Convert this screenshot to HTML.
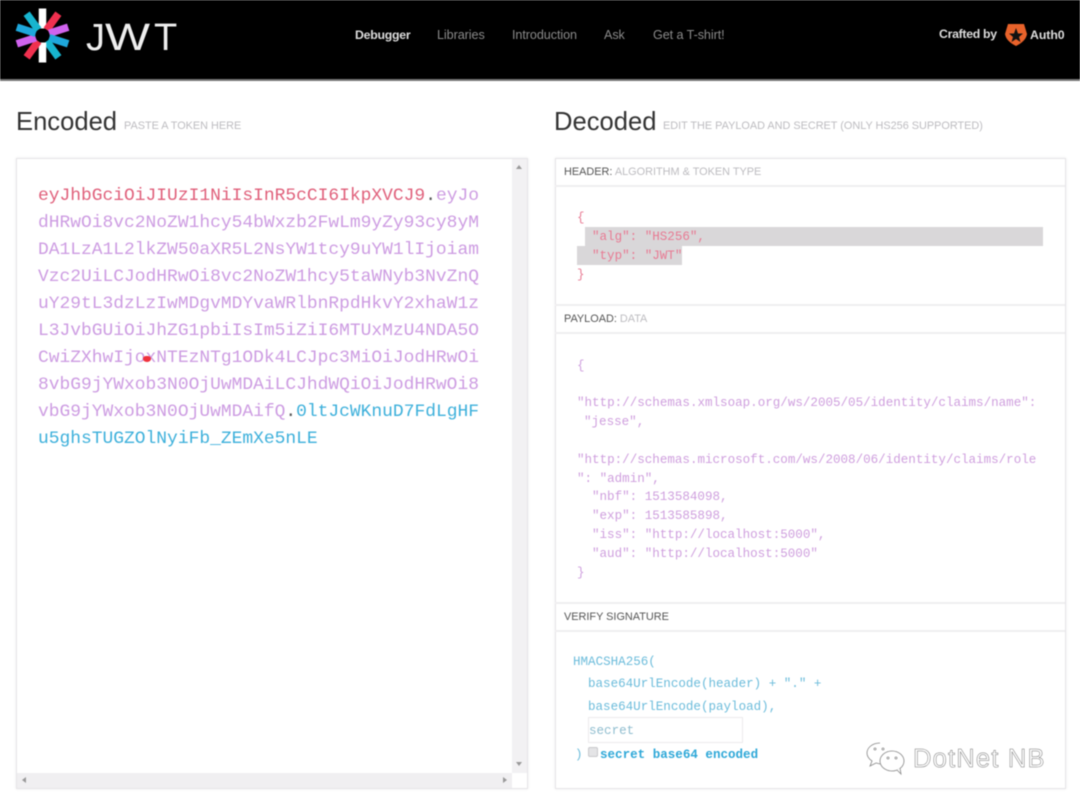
<!DOCTYPE html>
<html>
<head>
<meta charset="utf-8">
<style>
html,body{margin:0;padding:0;background:#fff;}
#p{position:relative;width:1080px;height:804px;overflow:hidden;background:#fff;font-family:"Liberation Sans",sans-serif;filter:blur(.55px);}
.a{position:absolute;white-space:pre;line-height:1;}
.m{font-family:"Liberation Mono",monospace;font-size:12.55px;}
.nav{font-size:12.6px;color:#8a8a8a;top:29px;letter-spacing:-.07px;}
.h1{font-size:25.6px;color:#333;top:110px;}
.sub{font-size:10.88px;color:#bdbcc0;top:121px;}
.lab{font-size:10.9px;color:#555;}
.lab span{color:#bdbcc0;}
.enc{font-family:"Liberation Mono",monospace;font-size:17.93px;line-height:27px;left:38px;}
.box{position:absolute;background:#fff;border:1px solid #e6e5e8;box-shadow:0 0 3px rgba(0,0,0,.08);box-sizing:border-box;}
.hr{position:absolute;left:555px;width:510px;height:2px;background:#efeef0;}
.r{color:#e87a93;}
.v{color:#cf9fde;}
.b{color:#6cbcdb;}
</style>
</head>
<body>
<div id="p">
  <!-- top bar -->
  <div class="a" style="left:0;top:0;width:1080px;height:79px;background:#000;"></div>
  <div class="a" style="left:0;top:79px;width:1080px;height:2px;background:#777;"></div>

  <svg class="a" style="left:0;top:0;" width="190" height="80" viewBox="0 0 190 80">
    <g transform="translate(42.5 35.5)" stroke-width="7.5" fill="none">
      <line x1="0" y1="-7" x2="0" y2="-27" stroke="#fff"/>
      <line x1="0" y1="-7" x2="0" y2="-27" stroke="#f0304f" transform="rotate(36)"/>
      <line x1="0" y1="-7" x2="0" y2="-27" stroke="#d063ee" transform="rotate(72)"/>
      <line x1="0" y1="-7" x2="0" y2="-27" stroke="#1ea7dc" transform="rotate(108)"/>
      <line x1="0" y1="-7" x2="0" y2="-27" stroke="#17b5cf" transform="rotate(144)"/>
      <line x1="0" y1="-7" x2="0" y2="-27" stroke="#fff" transform="rotate(180)"/>
      <line x1="0" y1="-7" x2="0" y2="-27" stroke="#f0304f" transform="rotate(216)"/>
      <line x1="0" y1="-7" x2="0" y2="-27" stroke="#d063ee" transform="rotate(252)"/>
      <line x1="0" y1="-7" x2="0" y2="-27" stroke="#1ea7dc" transform="rotate(288)"/>
      <line x1="0" y1="-7" x2="0" y2="-27" stroke="#17b5cf" transform="rotate(324)"/>
      <circle r="7" fill="#000"/>
    </g>
    <text x="86" y="50" font-family="Liberation Sans" font-size="38" fill="#eee">J</text>
    <text x="105" y="50" font-family="Liberation Sans" font-size="38" fill="#eee" textLength="45" lengthAdjust="spacingAndGlyphs">W</text>
    <text x="154" y="50" font-family="Liberation Sans" font-size="38" fill="#eee">T</text>
  </svg>

  <div class="a nav" style="left:355px;color:#ddd;font-weight:bold;font-size:12.3px;letter-spacing:-.25px;">Debugger</div>
  <div class="a nav" style="left:437px;">Libraries</div>
  <div class="a nav" style="left:512px;">Introduction</div>
  <div class="a nav" style="left:604px;">Ask</div>
  <div class="a nav" style="left:653px;">Get a T-shirt!</div>
  <div class="a nav" style="left:939px;top:28px;color:#ddd;font-weight:bold;font-size:12.3px;letter-spacing:-.3px;">Crafted by</div>
  <svg class="a" style="left:1004px;top:21px;" width="24" height="26" viewBox="0 0 24 26">
    <path d="M4 3 L20 3 L23 13 Q22 20 12 25 Q2 20 1 13 Z" fill="#e8622a"/>
    <path d="M12 7 L14 12.5 L19 12.5 L15 16 L16.5 21 L12 18 L7.5 21 L9 16 L5 12.5 L10 12.5 Z" fill="#111"/>
  </svg>
  <div class="a nav" style="left:1030px;top:29px;color:#ddd;font-weight:bold;font-size:12.3px;letter-spacing:-.05px;">Auth0</div>

  <!-- headings -->
  <div class="a h1" style="left:16px;">Encoded</div>
  <div class="a sub" style="left:124px;">PASTE A TOKEN HERE</div>
  <div class="a h1" style="left:554px;">Decoded</div>
  <div class="a sub" style="left:663px;">EDIT THE PAYLOAD AND SECRET (ONLY HS256 SUPPORTED)</div>

  <!-- left panel -->
  <div class="box" style="left:16px;top:158px;width:512px;height:631px;"></div>
  <div class="a" style="left:512px;top:159px;width:15px;height:614px;background:#f2f1f3;"></div>
  <div class="a" style="left:17px;top:773px;width:495px;height:15px;background:#f0eff1;"></div>
  <div class="a" style="left:516px;top:165px;width:0;height:0;border-left:3.5px solid transparent;border-right:3.5px solid transparent;border-bottom:4px solid #999;"></div>
  <div class="a" style="left:516px;top:762px;width:0;height:0;border-left:3.5px solid transparent;border-right:3.5px solid transparent;border-top:4px solid #999;"></div>
  <div class="a" style="left:22px;top:777px;width:0;height:0;border-top:3.5px solid transparent;border-bottom:3.5px solid transparent;border-right:4px solid #999;"></div>
  <div class="a" style="left:503px;top:777px;width:0;height:0;border-top:3.5px solid transparent;border-bottom:3.5px solid transparent;border-left:4px solid #999;"></div>

  <div class="a enc" style="top:183px;color:#cd9ce2;"><span style="color:#e0607b;">eyJhbGciOiJIUzI1NiIsInR5cCI6IkpXVCJ9</span><span style="color:#555;">.</span>eyJo
dHRwOi8vc2NoZW1hcy54bWxzb2FwLm9yZy93cy8yM
DA1LzA1L2lkZW50aXR5L2NsYW1tcy9uYW1lIjoiam
Vzc2UiLCJodHRwOi8vc2NoZW1hcy5taWNyb3NvZnQ
uY29tL3dzLzIwMDgvMDYvaWRlbnRpdHkvY2xhaW1z
L3JvbGUiOiJhZG1pbiIsIm5iZiI6MTUxMzU4NDA5O
CwiZXhwIjoxNTEzNTg1ODk4LCJpc3MiOiJodHRwOi
8vbG9jYWxob3N0OjUwMDAiLCJhdWQiOiJodHRwOi8
vbG9jYWxob3N0OjUwMDAifQ<span style="color:#555;">.</span><span style="color:#3db0db;">0ltJcWKnuD7FdLgHF
u5ghsTUGZOlNyiFb_ZEmXe5nLE</span></div>
  <div class="a" style="left:143px;top:356px;width:8px;height:6px;background:#f0323c;border-radius:50% 50% 60% 60%;"></div>

  <!-- right panel -->
  <div class="box" style="left:555px;top:158px;width:511px;height:631px;"></div>
  <div class="hr" style="top:185px;"></div>
  <div class="hr" style="top:304px;"></div>
  <div class="hr" style="top:332px;"></div>
  <div class="hr" style="top:602px;"></div>
  <div class="hr" style="top:630px;"></div>

  <div class="a lab" style="left:564px;top:167px;">HEADER:<span> ALGORITHM &amp; TOKEN TYPE</span></div>
  <div class="a lab" style="left:564px;top:314px;">PAYLOAD:<span> DATA</span></div>
  <div class="a lab" style="left:564px;top:612px;">VERIFY SIGNATURE</div>

  <div class="a" style="left:585px;top:227px;width:458px;height:19px;background:#d9d7d9;"></div>
  <div class="a" style="left:577px;top:246px;width:105px;height:19px;background:#d9d7d9;"></div>

  <div class="a m r" style="left:577px;top:212px;">{</div>
  <div class="a m r" style="left:592px;top:231px;">"alg": "HS256",</div>
  <div class="a m r" style="left:592px;top:250px;">"typ": "JWT"</div>
  <div class="a m r" style="left:577px;top:269px;">}</div>

  <div class="a m v" style="left:577px;top:360px;">{</div>
  <div class="a m v" style="left:577px;top:397px;">"http://schemas.xmlsoap.org/ws/2005/05/identity/claims/name":</div>
  <div class="a m v" style="left:584px;top:416px;">"jesse",</div>
  <div class="a m v" style="left:577px;top:454px;">"http://schemas.microsoft.com/ws/2008/06/identity/claims/role</div>
  <div class="a m v" style="left:577px;top:473px;">": "admin",</div>
  <div class="a m v" style="left:592px;top:491px;">"nbf": 1513584098,</div>
  <div class="a m v" style="left:592px;top:510px;">"exp": 1513585898,</div>
  <div class="a m v" style="left:592px;top:529px;">"iss": "http://localhost:5000",</div>
  <div class="a m v" style="left:592px;top:548px;">"aud": "http://localhost:5000"</div>
  <div class="a m v" style="left:577px;top:567px;">}</div>

  <div class="a m b" style="left:573px;top:656px;">HMACSHA256(</div>
  <div class="a m b" style="left:588px;top:678px;">base64UrlEncode(header) + "." +</div>
  <div class="a m b" style="left:588px;top:701px;">base64UrlEncode(payload),</div>
  <div class="a" style="left:588px;top:717px;width:155px;height:26px;border:1px solid #eceaec;box-sizing:border-box;"></div>
  <div class="a m" style="left:589px;top:725px;color:#8fbdcf;">secret</div>
  <div class="a m b" style="left:575px;top:749px;">)</div>
  <div class="a" style="left:588px;top:747px;width:10px;height:10px;background:#e4e4e6;border:1px solid #c8c8cc;box-sizing:border-box;border-radius:2px;"></div>
  <div class="a m" style="left:600px;top:749px;color:#2ea8d8;font-weight:bold;">secret base64 encoded</div>

  <!-- watermark -->
  <svg class="a" style="left:866px;top:741px;" width="42" height="34" viewBox="0 0 42 34" fill="#fff" stroke="#888" stroke-width=".8">
    <path d="M14 2 C6 2 1 7 1 12 C1 15 3 18 6 20 L4 25 L10 22 C11 22 13 23 15 23"/>
    <ellipse cx="26" cy="20" rx="12" ry="10"/>
    <path d="M31 29 L35 33 L34 27"/>
    <circle cx="22" cy="17" r="1"/><circle cx="30" cy="17" r="1"/>
    <circle cx="9" cy="8" r="1"/><circle cx="17" cy="8" r="1"/>
  </svg>
  <div class="a" style="left:913px;top:747px;font-size:25.5px;color:#fff;-webkit-text-stroke:.5px #777;letter-spacing:1.2px;">DotNet NB</div>
</div>
</body>
</html>
